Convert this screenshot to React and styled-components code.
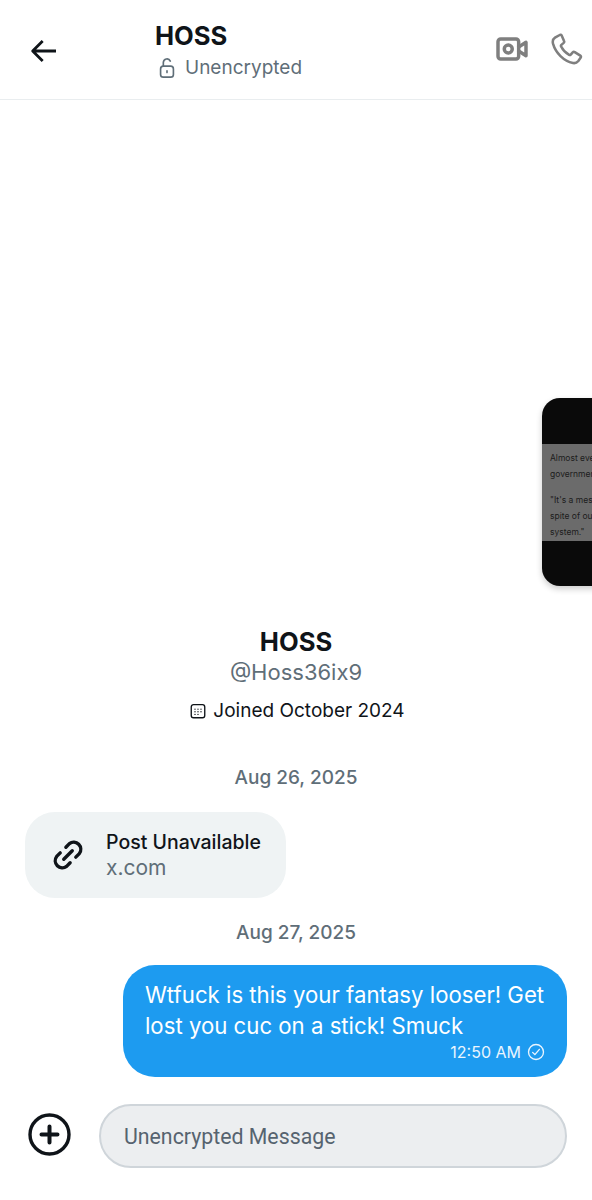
import React from "react";
import styled, { createGlobalStyle } from "styled-components";

const GlobalStyle = createGlobalStyle`
  html, body {
    margin: 0;
    padding: 0;
    background: #fff;
  }
  * {
    box-sizing: border-box;
  }
`;

const Page = styled.div`
  position: relative;
  width: 592px;
  height: 1200px;
  display: flex;
  flex-direction: column;
  overflow: hidden;
  background: #fff;
  font-family: Inter, "Noto Sans", sans-serif;
  color: #0f1419;
`;

const Header = styled.header`
  height: 100px;
  flex: none;
  display: flex;
  align-items: flex-start;
  padding: 21px 9px 0 28px;
  border-bottom: 1px solid #e9edef;
`;

const BackButton = styled.div`
  width: 127px;
  padding-top: 14px;
  color: #0f1419;
  line-height: 0;
`;

const Title = styled.div`
  flex: 1;
  display: flex;
  flex-direction: column;
`;

const TitleName = styled.div`
  font-size: 25.6px;
  line-height: 30px;
  font-weight: 700;
`;

const Status = styled.div`
  display: flex;
  align-items: center;
  gap: 7px;
  margin-top: 2px;
  margin-left: 1px;
  font-size: 19px;
  line-height: 30px;
  color: #5f6e78;
`;

const HeaderActions = styled.div`
  display: flex;
  align-items: center;
  gap: 23px;
  margin-top: 12px;
  color: #7f7f7f;
  line-height: 0;
`;

const Thread = styled.main`
  flex: 1;
  display: flex;
  flex-direction: column;
  justify-content: flex-end;
  padding: 0 25px 20px;
`;

const Profile = styled.section`
  display: flex;
  flex-direction: column;
  align-items: center;
`;

const ProfileName = styled.div`
  font-size: 25.6px;
  line-height: 30px;
  font-weight: 700;
`;

const Handle = styled.div`
  font-size: 22px;
  line-height: 30px;
  color: #5f6e78;
`;

const Joined = styled.div`
  display: flex;
  align-items: center;
  gap: 6px;
  margin-top: 10px;
  margin-left: 2px;
  font-size: 19px;
  line-height: 28px;
`;

const DateLabel = styled.div`
  text-align: center;
  font-size: 19px;
  line-height: 24px;
  font-weight: 500;
  color: #5f6e78;
  margin: ${(p) => p.$top}px 0 ${(p) => p.$bottom}px;
`;

const LinkCard = styled.div`
  align-self: flex-start;
  width: 261px;
  height: 86px;
  display: flex;
  align-items: center;
  gap: 21px;
  padding-left: 26px;
  background: #eff3f4;
  border-radius: 30px;
`;

const LinkText = styled.div`
  display: flex;
  flex-direction: column;
`;

const LinkTitle = styled.div`
  font-size: 19.5px;
  line-height: 26px;
  font-weight: 500;
`;

const LinkHost = styled.div`
  font-size: 21px;
  line-height: 26px;
  color: #5f6e78;
`;

const Bubble = styled.div`
  align-self: flex-end;
  width: 444px;
  height: 112px;
  padding: 14px 22px 0;
  background: #1d9bf0;
  border-radius: 32px;
  color: #fff;
`;

const BubbleText = styled.div`
  font-size: 22.2px;
  line-height: 31px;
  white-space: nowrap;
`;

const BubbleMeta = styled.div`
  display: flex;
  justify-content: flex-end;
  align-items: center;
  gap: 6px;
  font-size: 16px;
  line-height: 20px;
  margin-top: 1px;
  color: #eaf5fe;
`;

const Composer = styled.footer`
  height: 103px;
  flex: none;
  display: flex;
  align-items: flex-start;
  padding: 7px 25px 0 28px;
`;

const AddButton = styled.div`
  width: 71px;
  padding-top: 9px;
  line-height: 0;
  color: #0f1419;
`;

const MessageInput = styled.div`
  flex: 1;
  height: 64px;
  display: flex;
  align-items: center;
  padding-left: 23px;
  background: #eceef0;
  border: 2px solid #cfd5da;
  border-radius: 32px;
  font-family: Roboto, sans-serif;
  font-size: 21.3px;
  color: #56636f;
`;

const FloatingPreview = styled.div`
  position: absolute;
  top: 398px;
  left: 542px;
  width: 80px;
  height: 188px;
  display: flex;
  flex-direction: column;
  justify-content: center;
  background: #0a0a0a;
  border-radius: 18px;
  box-shadow: 0 3px 6px rgba(0, 0, 0, 0.2);
  overflow: hidden;
`;

const PreviewPage = styled.div`
  height: 97px;
  padding: 6px 0 0 8px;
  background: #6b6b6b;
  color: #1c1c1c;
  font-size: 8.5px;
  line-height: 16px;
  white-space: nowrap;
`;

const PreviewPara = styled.div`
  margin-bottom: 10px;
`;

const Svg = ({ size, view = "0 0 24 24", sw = 2, children }) => (
  <svg
    width={size}
    height={size}
    viewBox={view}
    fill="none"
    stroke="currentColor"
    strokeWidth={sw}
    strokeLinecap="round"
    strokeLinejoin="round"
  >
    {children}
  </svg>
);

export default function App() {
  return (
    <Page>
      <GlobalStyle />
      <Header>
        <BackButton>
          <Svg size={32} sw={2.1}>
            <path d="M21 12H3.500M11 4.500 3.500 12l7.500 7.500" strokeLinecap="butt" />
          </Svg>
        </BackButton>
        <Title>
          <TitleName>HOSS</TitleName>
          <Status>
            <Svg size={22} sw={1.8}>
              <rect x="5" y="10" width="14" height="12" rx="3" />
              <path d="M8 10V6a4 4 0 0 1 7.600-1.600M12 15v2" />
            </Svg>
            Unencrypted
          </Status>
        </Title>
        <HeaderActions>
          <Svg size={32} sw={2.6}>
            <rect x="1.500" y="4.500" width="15.500" height="15" rx="2" />
            <circle cx="9.200" cy="12" r="3" />
            <path d="M17 10.500 22.500 7v10L17 13.500" />
          </Svg>
          <Svg size={32} sw={1.9}>
            <path d="M6.500 1.500 3 3.500C1.500 4.500 1 6 1.500 8c2 7 8 13 15 14.500 1.500.3 3-.3 4-1.500l1.800-2.600a1 1 0 0 0-.3-1.400l-4.200-2.700a1.200 1.200 0 0 0-1.500.2l-1.500 1.700a1 1 0 0 1-1.200.2c-2.500-1.400-4.800-3.800-6-6.300a1 1 0 0 1 .2-1.200l1.700-1.500a1.200 1.200 0 0 0 .2-1.500L8 1.900a1 1 0 0 0-1.500-.4Z" />
          </Svg>
        </HeaderActions>
      </Header>

      <Thread>
        <Profile>
          <ProfileName>HOSS</ProfileName>
          <Handle>@Hoss36ix9</Handle>
          <Joined>
            <Svg size={18} sw={1.8}>
              <rect x="3" y="3.500" width="18" height="17.500" rx="3" />
              <path d="M8 9.500h.01M12 9.500h.01M16 9.500h.01M8 13h.01M12 13h.01M16 13h.01M8 16.500h.01M12 16.500h.01" />
            </Svg>
            Joined October 2024
          </Joined>
        </Profile>

        <DateLabel $top={41} $bottom={22}>Aug 26, 2025</DateLabel>
        <LinkCard>
          <Svg size={34} sw={2.4}>
            <path d="M10.500 6.500 13 4a5 5 0 0 1 7 7l-2.500 2.500M13.500 17.500 11 20a5 5 0 0 1-7-7l2.500-2.500M9 15l6-6" />
          </Svg>
          <LinkText>
            <LinkTitle>Post Unavailable</LinkTitle>
            <LinkHost>x.com</LinkHost>
          </LinkText>
        </LinkCard>

        <DateLabel $top={23} $bottom={20}>Aug 27, 2025</DateLabel>
        <Bubble>
          <BubbleText>
            Wtfuck is this your fantasy looser! Get
            <br />
            lost you cuc on a stick! Smuck
          </BubbleText>
          <BubbleMeta>
            12:50 AM
            <Svg size={18} sw={1.8}>
              <circle cx="12" cy="12" r="10" />
              <path d="m7.500 12.500 3 3 6-7" />
            </Svg>
          </BubbleMeta>
        </Bubble>
      </Thread>

      <Composer>
        <AddButton>
          <svg width="43" height="43" viewBox="0 0 43 43" fill="none" stroke="currentColor">
            <circle cx="21.500" cy="21.500" r="19.500" strokeWidth="3.400" />
            <path d="M21.500 13.500v16M13.500 21.500h16" strokeWidth="4" strokeLinecap="round" />
          </svg>
        </AddButton>
        <MessageInput>Unencrypted Message</MessageInput>
      </Composer>

      <FloatingPreview>
        <PreviewPage>
          <div>Almost every</div>
          <PreviewPara>government</PreviewPara>
          <div>"It's a mess</div>
          <div>spite of our</div>
          <div>system."</div>
        </PreviewPage>
      </FloatingPreview>
    </Page>
  );
}
